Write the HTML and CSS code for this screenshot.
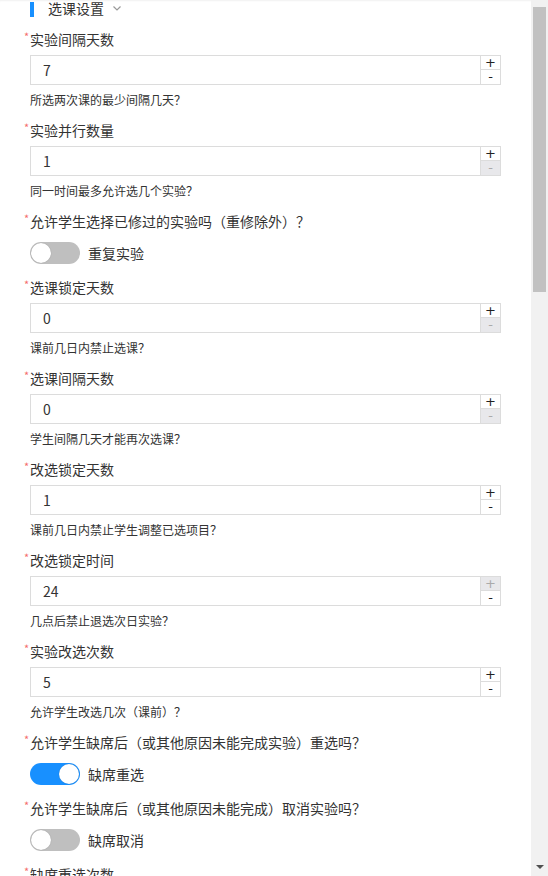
FILE: index.html
```html
<!DOCTYPE html>
<html lang="zh-CN">
  <head>
    <meta charset="UTF-8" />
    <meta name="viewport" content="width=device-width, initial-scale=1.0" />
    <title>选课设置</title>
    <link rel="stylesheet" href="styles.css">
  </head>
  <body>
    <div class="page">
      <form class="form">
        <div class="section-title">
          <span class="bar"></span>
          <span>选课设置</span>
          <svg class="chevron" width="8" height="5" viewBox="0 0 8 5">
            <polyline points="0.5,0.5 4,4 7.5,0.5" fill="none" stroke="#999" stroke-width="1.2" />
          </svg>
        </div>

        <div class="field">
          <div class="label"><span class="req">*</span>实验间隔天数</div>
          <div class="number">
            <input class="number-input" type="text" value="7" />
            <div class="spin">
              <span class="spin-btn up">+</span>
              <span class="spin-btn down">-</span>
            </div>
          </div>
          <div class="help">所选两次课的最少间隔几天？</div>
        </div>

        <div class="field">
          <div class="label"><span class="req">*</span>实验并行数量</div>
          <div class="number">
            <input class="number-input" type="text" value="1" />
            <div class="spin">
              <span class="spin-btn up">+</span>
              <span class="spin-btn down disabled">-</span>
            </div>
          </div>
          <div class="help">同一时间最多允许选几个实验？</div>
        </div>

        <div class="field">
          <div class="label"><span class="req">*</span>允许学生选择已修过的实验吗（重修除外）？</div>
          <label class="switch-row">
            <span class="switch"></span>
            <span>重复实验</span>
          </label>
        </div>

        <div class="field">
          <div class="label"><span class="req">*</span>选课锁定天数</div>
          <div class="number">
            <input class="number-input" type="text" value="0" />
            <div class="spin">
              <span class="spin-btn up">+</span>
              <span class="spin-btn down disabled">-</span>
            </div>
          </div>
          <div class="help">课前几日内禁止选课？</div>
        </div>

        <div class="field">
          <div class="label"><span class="req">*</span>选课间隔天数</div>
          <div class="number">
            <input class="number-input" type="text" value="0" />
            <div class="spin">
              <span class="spin-btn up">+</span>
              <span class="spin-btn down disabled">-</span>
            </div>
          </div>
          <div class="help">学生间隔几天才能再次选课？</div>
        </div>

        <div class="field">
          <div class="label"><span class="req">*</span>改选锁定天数</div>
          <div class="number">
            <input class="number-input" type="text" value="1" />
            <div class="spin">
              <span class="spin-btn up">+</span>
              <span class="spin-btn down">-</span>
            </div>
          </div>
          <div class="help">课前几日内禁止学生调整已选项目？</div>
        </div>

        <div class="field">
          <div class="label"><span class="req">*</span>改选锁定时间</div>
          <div class="number">
            <input class="number-input" type="text" value="24" />
            <div class="spin">
              <span class="spin-btn up disabled">+</span>
              <span class="spin-btn down">-</span>
            </div>
          </div>
          <div class="help">几点后禁止退选次日实验？</div>
        </div>

        <div class="field">
          <div class="label"><span class="req">*</span>实验改选次数</div>
          <div class="number">
            <input class="number-input" type="text" value="5" />
            <div class="spin">
              <span class="spin-btn up">+</span>
              <span class="spin-btn down">-</span>
            </div>
          </div>
          <div class="help">允许学生改选几次（课前）？</div>
        </div>

        <div class="field">
          <div class="label"><span class="req">*</span>允许学生缺席后（或其他原因未能完成实验）重选吗？</div>
          <label class="switch-row">
            <span class="switch on"></span>
            <span>缺席重选</span>
          </label>
        </div>

        <div class="field">
          <div class="label"><span class="req">*</span>允许学生缺席后（或其他原因未能完成）取消实验吗？</div>
          <label class="switch-row">
            <span class="switch"></span>
            <span>缺席取消</span>
          </label>
        </div>

        <div class="field">
          <div class="label"><span class="req">*</span>缺席重选次数</div>
        </div>
      </form>
    </div>

    <div class="scrollbar">
      <div class="thumb"></div>
      <div class="arrow-down"></div>
    </div>
  </body>
</html>
```

FILE: styles.css
```css
body {
  margin: 0;
  display: flex;
  height: 100vh;
  overflow: hidden;
  font-family: "Noto Sans CJK SC", "Noto Sans", sans-serif;
  font-size: 14px;
  color: #333;
  background-color: #fff;
}

.page {
  flex: 1;
  min-width: 0;
  overflow: hidden;
  box-shadow: inset 0 2px 2px -1px rgba(0, 0, 0, 0.06);
}

/* scrollbar drawn by hand: the headless browser hides the native one */
.scrollbar {
  display: flex;
  flex-direction: column;
  width: 17px;
  background-color: #f1f1f1;
}

.thumb {
  height: 285px;
  margin: 7px 2px 0;
  background-color: #c1c1c1;
}

.arrow-down {
  margin-top: auto;
  height: 17px;
  display: flex;
  justify-content: center;
  align-items: center;
}

.arrow-down::before {
  content: "";
  margin-top: -1px;
  border-left: 4px solid transparent;
  border-right: 4px solid transparent;
  border-top: 4px solid #505050;
}

.form {
  padding: 0 30px;
}

.section-title {
  display: flex;
  align-items: center;
  height: 16px;
  line-height: 16px;
  margin-bottom: 15px;
}

.section-title .bar {
  align-self: flex-start;
  width: 4px;
  height: 15px;
  margin-top: 2px;
  margin-right: 14px;
  background-color: #1890ff;
}

.section-title .chevron {
  margin-left: 9px;
}

.field {
  margin-bottom: 12px;
}

.label {
  line-height: 16px;
  padding-bottom: 8px;
}

.req {
  display: inline-block;
  width: 6px;
  margin-left: -6px;
  font-size: 11px;
  line-height: 10px;
  vertical-align: top;
  color: #f56c6c;
}

.number {
  display: flex;
  height: 30px;
  box-sizing: border-box;
  border: 1px solid #dcdcdc;
  background-color: #fff;
}

.number-input {
  flex: 1;
  min-width: 0;
  border: none;
  outline: none;
  padding: 0 12px;
  font-family: "Noto Sans CJK SC", "Noto Sans", sans-serif;
  font-size: 14px;
  color: #333;
  background: transparent;
}

.spin {
  display: flex;
  flex-direction: column;
  width: 20px;
  box-sizing: border-box;
  border-left: 1px solid #dcdcdc;
}

.spin-btn {
  display: flex;
  align-items: center;
  justify-content: center;
  overflow: hidden;
  font-family: "DejaVu Sans", sans-serif;
  font-size: 13px;
  line-height: 12px;
  color: #222;
  cursor: pointer;
}

.spin-btn.up {
  height: 13px;
  border-bottom: 1px solid #dcdcdc;
}

.spin-btn.down {
  flex: 1;
}

.spin-btn.disabled {
  background-color: #e8e8eb;
  color: #aaa;
  cursor: not-allowed;
}

.help {
  margin-top: 5px;
  line-height: 20px;
  font-size: 12px;
}

.switch-row {
  display: flex;
  align-items: center;
  margin-top: 5px;
  padding-bottom: 3px;
  height: 22px;
  cursor: pointer;
}

.switch {
  position: relative;
  width: 50px;
  height: 22px;
  margin-right: 8px;
  border-radius: 11px;
  background-color: #bfbfbf;
}

.switch::after {
  content: "";
  position: absolute;
  top: 1px;
  left: 1px;
  width: 20px;
  height: 20px;
  border-radius: 50%;
  background-color: #fff;
  box-shadow: 0 0 1px rgba(0, 0, 0, 0.3);
}

.switch.on {
  background-color: #1890ff;
}

.switch.on::after {
  left: 29px;
}
```
